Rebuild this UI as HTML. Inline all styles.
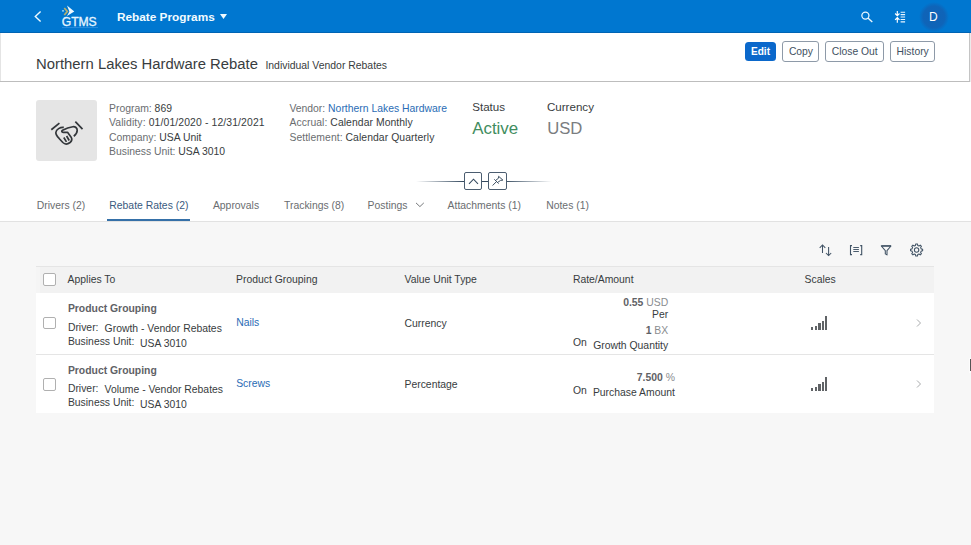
<!DOCTYPE html>
<html><head><meta charset="utf-8">
<style>
*{box-sizing:border-box;margin:0;padding:0}
html,body{width:971px;height:545px;overflow:hidden;background:#f7f7f7;font-family:"Liberation Sans",sans-serif;color:#32363a}
.t{position:absolute;white-space:nowrap;line-height:1}
.r{position:absolute}
</style></head><body>
<div class="r" style="left:0px;top:0px;width:971px;height:545px;background:#f7f7f7"></div>
<div class="r" style="left:0px;top:0px;width:971px;height:33px;background:#0077d0"></div>
<div class="r" style="left:0px;top:32px;width:971px;height:1px;background:#0064b4"></div>
<div class="r" style="left:0px;top:33px;width:971px;height:49px;background:#fff"></div>
<div class="r" style="left:0px;top:33px;width:1px;height:49px;background:#e4e4e4"></div>
<div class="r" style="left:969px;top:33px;width:1px;height:49px;background:#c4c4c4"></div>
<div class="r" style="left:970px;top:33px;width:1px;height:49px;background:#ebebeb"></div>
<div class="r" style="left:0px;top:81px;width:970px;height:1px;background:#bdbdbd"></div>
<div class="r" style="left:0px;top:82px;width:971px;height:139px;background:#fff"></div>
<div class="r" style="left:0px;top:221px;width:971px;height:1px;background:#e2e2e2"></div>
<svg class="r" style="left:30px;top:8px;" width="16" height="18" viewBox="0 0 16 18"><path d="M10.6 3.6 L5.3 8.6 L10.6 13.4" fill="none" stroke="#eefaff" stroke-width="1.4"/></svg>
<svg class="r" style="left:60px;top:3px;" width="20" height="14" viewBox="0 0 20 14"><path d="M7 2.6 L14.3 8.5 L7 13 L9.4 8.5 Z" fill="#eef9ff"/><path d="M4.3 5 L7.3 8.5 L4.3 12" fill="none" stroke="#b9b06a" stroke-width="1.7"/><circle cx="3" cy="7.8" r="0.9" fill="#aee6ff"/></svg>
<div class="r" style="left:62px;top:27.2px;width:35.6px;height:1px;background:#3f9ae6;opacity:0.6"></div>
<div class="t" style="left:61.80px;top:15.87px;font-size:12.2px;color:#e6f5ff;font-weight:normal;letter-spacing:-0.15px;-webkit-text-stroke:0.3px #e6f5ff">GTMS</div>
<div class="t" style="left:117.00px;top:11.51px;font-size:11.8px;color:#f2fbff;font-weight:bold;">Rebate Programs</div>
<svg class="r" style="left:219px;top:13px;" width="9" height="7" viewBox="0 0 9 7"><path d="M1 1 L8 1 L4.5 6 Z" fill="#eefaff"/></svg>
<svg class="r" style="left:858.6px;top:8.7px;" width="16" height="16" viewBox="0 0 16 16"><circle cx="6.4" cy="6.6" r="3.55" fill="none" stroke="#eaf7ff" stroke-width="1.25"/><path d="M8.9 9.1 L13.3 13.1" stroke="#eaf7ff" stroke-width="1.35"/></svg>
<svg class="r" style="left:890px;top:6px;" width="22" height="20" viewBox="0 0 22 20"><g stroke="#fff" stroke-width="1.15" fill="none"><path d="M10.6 6.2h4.5M10.6 8.6h4.5M10.6 11h4.5M10.6 13.5h4.5M10.6 15.9h4.5" stroke="#e9f6ff"/><path d="M7.3 5.1 V9.6 M5.1 7.5 L7.3 9.7 L9.5 7.5 M7.3 11.6 V16.7 M5.1 13.8 L7.3 11.6 L9.5 13.8"/></g></svg>
<div class="r" style="left:918.5px;top:1.5px;width:30px;height:30px;background:radial-gradient(circle closest-side,#0f63b6 0%,#0f64b8 72%,rgba(0,119,208,0) 100%);border-radius:50%"></div>
<div class="t" style="left:929.00px;top:11.34px;font-size:12px;color:#fff;font-weight:normal;">D</div>
<div class="t" style="left:36.00px;top:57.23px;font-size:14.85px;color:#383c40;font-weight:normal;">Northern Lakes Hardware Rebate</div>
<div class="t" style="left:265.40px;top:60.97px;font-size:10.43px;color:#383c40;font-weight:normal;">Individual Vendor Rebates</div>
<div class="r" style="left:744.6px;top:41.5px;width:31.4px;height:19.7px;background:#0b68cb;border-radius:3.5px"></div>
<div class="t" style="left:751.00px;top:47.18px;font-size:10.06px;color:#fff;font-weight:bold;">Edit</div>
<div class="r" style="left:782.2px;top:41.2px;width:37.1px;height:20.4px;border:1px solid #8e9aa8;border-radius:3px;background:#fff"></div>
<div class="t" style="left:788.90px;top:47.44px;font-size:10.35px;color:#3f5161;font-weight:normal;">Copy</div>
<div class="r" style="left:825.2px;top:41.2px;width:58.5px;height:20.4px;border:1px solid #8e9aa8;border-radius:3px;background:#fff"></div>
<div class="t" style="left:831.70px;top:47.44px;font-size:10.35px;color:#3f5161;font-weight:normal;">Close Out</div>
<div class="r" style="left:890.2px;top:41.2px;width:44.5px;height:20.4px;border:1px solid #8e9aa8;border-radius:3px;background:#fff"></div>
<div class="t" style="left:896.60px;top:47.44px;font-size:10.35px;color:#3f5161;font-weight:normal;">History</div>
<div class="r" style="left:36px;top:100px;width:61px;height:61px;background:#e5e5e5;border-radius:3px"></div>
<svg class="r" style="left:46px;top:116px;" width="42" height="34" viewBox="0 0 673 545"><g fill="none" stroke="#32363a" stroke-width="27" stroke-linecap="butt" stroke-linejoin="round"><path d="M85 220 L215 115"/><path d="M470 90 L585 210"/><path d="M285 182 C230 175 160 215 158 265 C155 300 180 330 210 360 L270 425 C300 455 345 455 385 425 C415 400 420 365 400 335 L345 262 L275 262 C250 262 245 240 265 228 C300 210 380 180 430 172 C470 168 500 190 500 230 C500 270 480 300 445 325"/><path d="M285 345 L328 415 M330 320 L372 392"/></g></svg>
<div class="t" style="left:109.00px;top:104.10px;font-size:10.4px;color:#383c40;font-weight:normal;"><span style="color:#6a6d70">Program:</span> 869</div>
<div class="t" style="left:109.00px;top:118.30px;font-size:10.4px;color:#383c40;font-weight:normal;letter-spacing:0.12px"><span style="color:#6a6d70">Validity:</span> 01/01/2020 - 12/31/2021</div>
<div class="t" style="left:109.00px;top:132.50px;font-size:10.4px;color:#383c40;font-weight:normal;"><span style="color:#6a6d70">Company:</span> USA Unit</div>
<div class="t" style="left:109.00px;top:146.70px;font-size:10.4px;color:#383c40;font-weight:normal;"><span style="color:#6a6d70">Business Unit:</span> USA 3010</div>
<div class="t" style="left:289.40px;top:104.10px;font-size:10.4px;color:#383c40;font-weight:normal;"><span style="color:#6a6d70">Vendor:</span> <span style="color:#2a6cb5">Northern Lakes Hardware</span></div>
<div class="t" style="left:289.40px;top:118.30px;font-size:10.4px;color:#383c40;font-weight:normal;letter-spacing:0.06px"><span style="color:#6a6d70">Accrual:</span> Calendar Monthly</div>
<div class="t" style="left:289.40px;top:132.50px;font-size:10.4px;color:#383c40;font-weight:normal;letter-spacing:0.06px"><span style="color:#6a6d70">Settlement:</span> Calendar Quarterly</div>
<div class="t" style="left:472.20px;top:101.18px;font-size:11.6px;color:#383c40;font-weight:normal;">Status</div>
<div class="t" style="left:546.90px;top:101.18px;font-size:11.6px;color:#383c40;font-weight:normal;">Currency</div>
<div class="t" style="left:472.20px;top:120.69px;font-size:16.9px;color:#3f8d60;font-weight:normal;">Active</div>
<div class="t" style="left:547.20px;top:120.86px;font-size:16.7px;color:#7a7d80;font-weight:normal;">USD</div>
<div class="r" style="left:416px;top:181px;width:136px;height:1px;background:linear-gradient(90deg,rgba(53,74,95,0) 0%,#354a5f 35%,#354a5f 65%,rgba(53,74,95,0) 100%)"></div>
<div class="r" style="left:464px;top:172px;width:18.2px;height:17.8px;border:1px solid #4b5d70;border-radius:2px;background:#fff"></div>
<div class="r" style="left:488.4px;top:172px;width:18.2px;height:17.8px;border:1px solid #4b5d70;border-radius:2px;background:#fff"></div>
<svg class="r" style="left:464px;top:172px;" width="19" height="18" viewBox="0 0 19 18"><path d="M5 11.8 L9.5 7.2 L14 11.8" fill="none" stroke="#354a5f" stroke-width="1.1"/></svg>
<svg class="r" style="left:488px;top:172px;" width="19" height="18" viewBox="0 0 19 18"><g fill="none" stroke="#3d4f62" stroke-width="1" stroke-linejoin="round"><path d="M4.6 13.5 L8.2 9.9"/><path d="M6.3 7.3 L10.6 11.6"/><path d="M7.5 8.5 L10.4 6.3 L10.6 4.3 L14.9 8.1 L12.6 8.4 L9.5 10.5"/></g></svg>
<div class="t" style="left:36.80px;top:201.20px;font-size:10.4px;color:#6a6d70;font-weight:normal;">Drivers (2)</div>
<div class="t" style="left:212.90px;top:201.20px;font-size:10.4px;color:#6a6d70;font-weight:normal;">Approvals</div>
<div class="t" style="left:284.00px;top:201.20px;font-size:10.4px;color:#6a6d70;font-weight:normal;">Trackings (8)</div>
<div class="t" style="left:367.60px;top:201.20px;font-size:10.4px;color:#6a6d70;font-weight:normal;">Postings</div>
<div class="t" style="left:447.60px;top:201.20px;font-size:10.4px;color:#6a6d70;font-weight:normal;">Attachments (1)</div>
<div class="t" style="left:546.20px;top:201.20px;font-size:10.4px;color:#6a6d70;font-weight:normal;">Notes (1)</div>
<div class="t" style="left:109.30px;top:201.20px;font-size:10.4px;color:#3a5a7e;font-weight:normal;">Rebate Rates (2)</div>
<div class="r" style="left:107.2px;top:219px;width:83px;height:2px;background:#3570a8"></div>
<svg class="r" style="left:414px;top:200px;" width="12" height="10" viewBox="0 0 12 10"><path d="M2 2.9 L5.9 6.6 L9.8 2.9" fill="none" stroke="#75787b" stroke-width="1"/></svg>
<svg class="r" style="left:815px;top:240px;" width="25" height="20" viewBox="0 0 25 20"><g fill="none" stroke="#415365" stroke-width="1.05"><path d="M7.5 13 V5 M4.7 7.8 L7.5 5 L10.3 7.8"/><path d="M13.6 7 V15.6 M11 13 L13.6 15.6 L16.2 13"/></g></svg>
<svg class="r" style="left:845px;top:240px;" width="25" height="20" viewBox="0 0 25 20"><g fill="none" stroke="#415365" stroke-width="1.1"><path d="M7 5.6 H5.5 V14.6 H7 M15.2 5.6 H16.7 V14.6 H15.2"/><path d="M8.3 7.5 H13.9 M8.3 9.5 H13.9 M8.3 11.5 H13.9" stroke-width="0.95"/></g></svg>
<svg class="r" style="left:875px;top:240.5px;" width="25" height="20" viewBox="0 0 25 20"><g fill="none" stroke="#415365" stroke-linejoin="round"><path d="M6.3 5 H16 L12 9.6 V13.9 L10.3 12.9 V9.6 Z" stroke-width="1.05"/><path d="M6.3 4.9 H16" stroke-width="1.4"/></g></svg>
<svg class="r" style="left:909px;top:243px;" width="15" height="14" viewBox="0 0 15 14"><g fill="none" stroke="#415365" stroke-width="1.05" stroke-linejoin="round"><path d="M6.46 2.44 L6.75 0.96 L8.45 0.96 L8.74 2.44 L10.02 2.97 L11.27 2.13 L12.47 3.33 L11.63 4.58 L12.16 5.86 L13.64 6.15 L13.64 7.85 L12.16 8.14 L11.63 9.42 L12.47 10.67 L11.27 11.87 L10.02 11.03 L8.74 11.56 L8.45 13.04 L6.75 13.04 L6.46 11.56 L5.18 11.03 L3.93 11.87 L2.73 10.67 L3.57 9.42 L3.04 8.14 L1.56 7.85 L1.56 6.15 L3.04 5.86 L3.57 4.58 L2.73 3.33 L3.93 2.13 L5.18 2.97 Z"/><circle cx="7.6" cy="7.0" r="2.2"/></g></svg>
<div class="r" style="left:36px;top:266px;width:898px;height:1px;background:#e5e5e5"></div>
<div class="r" style="left:36px;top:267px;width:898px;height:26px;background:#f2f2f2"></div>
<div class="r" style="left:36px;top:267px;width:4px;height:26px;background:#f5f5f5"></div>
<div class="r" style="left:36px;top:293px;width:898px;height:61px;background:#fff"></div>
<div class="r" style="left:36px;top:354px;width:898px;height:1px;background:#e5e5e5"></div>
<div class="r" style="left:36px;top:355px;width:898px;height:58px;background:#fff"></div>
<div class="r" style="left:43.3px;top:273.3px;width:12.6px;height:12.4px;border:1px solid #b0b0b0;border-radius:2px;background:#fff"></div>
<div class="t" style="left:67.60px;top:274.60px;font-size:10.4px;color:#383c40;font-weight:normal;">Applies To</div>
<div class="t" style="left:236.00px;top:274.60px;font-size:10.4px;color:#383c40;font-weight:normal;">Product Grouping</div>
<div class="t" style="left:404.50px;top:274.60px;font-size:10.4px;color:#383c40;font-weight:normal;">Value Unit Type</div>
<div class="t" style="left:572.90px;top:274.60px;font-size:10.4px;color:#383c40;font-weight:normal;">Rate/Amount</div>
<div class="t" style="left:804.60px;top:274.60px;font-size:10.4px;color:#383c40;font-weight:normal;">Scales</div>
<div class="r" style="left:43.3px;top:317px;width:12.6px;height:12.4px;border:1px solid #b0b0b0;border-radius:2px;background:#fff"></div>
<div class="t" style="left:67.90px;top:304.10px;font-size:10.4px;color:#5f6266;font-weight:bold;">Product Grouping</div>
<div class="t" style="left:67.90px;top:323.20px;font-size:10.4px;color:#383c40;font-weight:normal;">Driver:</div>
<div class="t" style="left:104.60px;top:324.20px;font-size:10.4px;color:#383c40;font-weight:normal;">Growth - Vendor Rebates</div>
<div class="t" style="left:67.90px;top:337.20px;font-size:10.4px;color:#383c40;font-weight:normal;">Business Unit:</div>
<div class="t" style="left:140.00px;top:338.70px;font-size:10.4px;color:#383c40;font-weight:normal;">USA 3010</div>
<div class="t" style="left:236.20px;top:317.80px;font-size:10.4px;color:#2a6cb5;font-weight:normal;">Nails</div>
<div class="t" style="left:404.50px;top:319.20px;font-size:10.4px;color:#383c40;font-weight:normal;">Currency</div>
<div class="t" style="right:302.80px;top:298.20px;font-size:10.4px;color:#383c40;font-weight:normal;"><b style="color:#5f6266">0.55</b> <span style="color:#8a8d90">USD</span></div>
<div class="t" style="right:302.80px;top:310.40px;font-size:10.4px;color:#383c40;font-weight:normal;">Per</div>
<div class="t" style="right:302.80px;top:325.80px;font-size:10.4px;color:#383c40;font-weight:normal;"><b style="color:#5f6266">1</b> <span style="color:#8a8d90">BX</span></div>
<div class="t" style="left:573.00px;top:338.10px;font-size:10.4px;color:#383c40;font-weight:normal;">On</div>
<div class="t" style="right:302.80px;top:340.70px;font-size:10.4px;color:#383c40;font-weight:normal;">Growth Quantity</div>
<div class="r" style="left:811.1px;top:327.3px;width:2.4px;height:2.5px;background:#606366"></div>
<div class="r" style="left:814.6px;top:325.9px;width:2.4px;height:3.9px;background:#606366"></div>
<div class="r" style="left:818.1999999999999px;top:323.3px;width:2.4px;height:6.5px;background:#606366"></div>
<div class="r" style="left:821.5px;top:320.9px;width:2.4px;height:8.9px;background:#606366"></div>
<div class="r" style="left:825.1px;top:316.2px;width:2.4px;height:13.6px;background:#606366"></div>
<svg class="r" style="left:914px;top:318px;" width="9" height="10" viewBox="0 0 9 10"><path d="M3 1.5 L6.5 5 L3 8.5" fill="none" stroke="#a9abad" stroke-width="1"/></svg>
<div class="r" style="left:43.3px;top:378.3px;width:12.6px;height:12.4px;border:1px solid #b0b0b0;border-radius:2px;background:#fff"></div>
<div class="t" style="left:67.90px;top:365.70px;font-size:10.4px;color:#5f6266;font-weight:bold;">Product Grouping</div>
<div class="t" style="left:67.90px;top:384.20px;font-size:10.4px;color:#383c40;font-weight:normal;">Driver:</div>
<div class="t" style="left:104.60px;top:385.20px;font-size:10.4px;color:#383c40;font-weight:normal;">Volume - Vendor Rebates</div>
<div class="t" style="left:67.90px;top:398.20px;font-size:10.4px;color:#383c40;font-weight:normal;">Business Unit:</div>
<div class="t" style="left:140.00px;top:399.70px;font-size:10.4px;color:#383c40;font-weight:normal;">USA 3010</div>
<div class="t" style="left:236.20px;top:379.10px;font-size:10.4px;color:#2a6cb5;font-weight:normal;">Screws</div>
<div class="t" style="left:404.50px;top:379.90px;font-size:10.4px;color:#383c40;font-weight:normal;">Percentage</div>
<div class="t" style="right:296.10px;top:373.30px;font-size:10.4px;color:#383c40;font-weight:normal;"><b style="color:#5f6266">7.500</b> <span style="color:#8a8d90">%</span></div>
<div class="t" style="left:573.00px;top:385.60px;font-size:10.4px;color:#383c40;font-weight:normal;">On</div>
<div class="t" style="right:296.10px;top:388.00px;font-size:10.4px;color:#383c40;font-weight:normal;">Purchase Amount</div>
<div class="r" style="left:811.1px;top:388.3px;width:2.4px;height:2.5px;background:#606366"></div>
<div class="r" style="left:814.6px;top:386.9px;width:2.4px;height:3.9px;background:#606366"></div>
<div class="r" style="left:818.1999999999999px;top:384.3px;width:2.4px;height:6.5px;background:#606366"></div>
<div class="r" style="left:821.5px;top:381.9px;width:2.4px;height:8.9px;background:#606366"></div>
<div class="r" style="left:825.1px;top:377.2px;width:2.4px;height:13.6px;background:#606366"></div>
<svg class="r" style="left:914px;top:379.2px;" width="9" height="10" viewBox="0 0 9 10"><path d="M3 1.5 L6.5 5 L3 8.5" fill="none" stroke="#a9abad" stroke-width="1"/></svg>
<div class="r" style="left:968.6px;top:357.5px;width:2.4px;height:15px;background:#fcfcfc"></div>
<div class="r" style="left:970px;top:359px;width:1px;height:12.3px;background:#555"></div>
</body></html>
